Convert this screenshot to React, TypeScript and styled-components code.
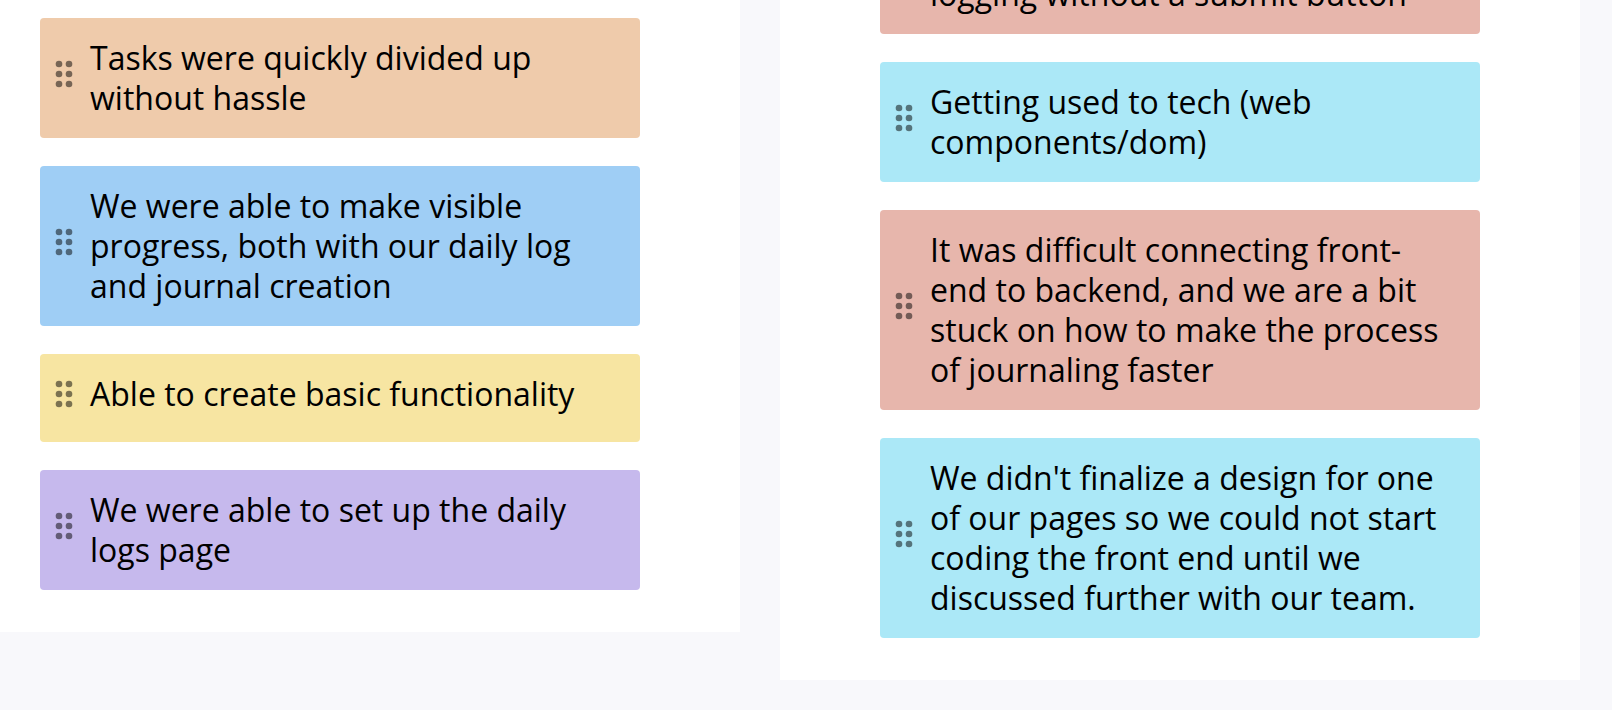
import React from "react";
import styled, { createGlobalStyle } from "styled-components";

const GlobalStyle = createGlobalStyle`
  *, *::before, *::after {
    box-sizing: border-box;
  }
  body {
    margin: 0;
    background: #f8f8fb;
    color: #000;
    font-family: "Open Sans", "Noto Sans", sans-serif;
    font-size: 32px;
    line-height: 40px;
  }
`;

const Board = styled.main`
  display: grid;
  grid-template-columns: 37fr 40fr;
  align-items: start;
  gap: 40px;
  min-height: 100vh;
  padding-right: 32px;
  overflow: hidden;
`;

const Column = styled.section<{ $edge?: boolean }>`
  background: #fff;
  padding: ${({ $edge }) => ($edge ? "18px 100px 42px 40px" : "0 100px 42px")};
`;

const CardList = styled.ul`
  display: flex;
  flex-direction: column;
  gap: 28px;
  margin: 0;
  padding: 0;
  list-style: none;
`;

const tones = {
  orange: "#efcbab",
  blue: "#9fcef5",
  yellow: "#f7e5a2",
  purple: "#c6b9ed",
  red: "#e7b6ac",
  cyan: "#abe8f7",
};

type Tone = keyof typeof tones;

const Card = styled.li<{ $tone: Tone; $continued?: boolean }>`
  display: flex;
  min-height: ${({ $continued }) => ($continued ? "0" : "88px")};
  margin-top: ${({ $continued }) => ($continued ? "-26px" : "0")};
  padding: 0 36px 0 4px;
  border-radius: 4px;
  background: ${({ $tone }) => tones[$tone]};
`;

const HandleSlot = styled.div`
  display: flex;
  flex: 0 0 46px;
  align-items: center;
  padding-bottom: 8px;
`;

const Handle = styled.button`
  display: block;
  width: 40px;
  height: 40px;
  padding: 0;
  border: 0;
  background: none;
  color: rgba(0, 0, 0, 0.5);
  cursor: grab;
`;

const CardText = styled.p<{ $continued?: boolean }>`
  flex: 1;
  min-width: 0;
  margin: 0;
  padding: ${({ $continued }) => ($continued ? "0 0 20px" : "20px 0")};
`;

const DragIcon = () => (
  <svg width="40" height="40" viewBox="0 0 24 24" fill="currentColor" aria-hidden="true">
    {[9, 15].map((cx) =>
      [6, 12, 18].map((cy) => <circle key={`${cx}-${cy}`} cx={cx} cy={cy} r="2" />)
    )}
  </svg>
);

interface Note {
  text: string;
  tone: Tone;
  continued?: boolean;
}

const wentWell: Note[] = [
  { tone: "orange", text: "Tasks were quickly divided up without hassle" },
  {
    tone: "blue",
    text: "We were able to make visible progress, both with our daily log and journal creation",
  },
  { tone: "yellow", text: "Able to create basic functionality" },
  { tone: "purple", text: "We were able to set up the daily logs page" },
];

const toImprove: Note[] = [
  { tone: "red", text: "logging without a submit button", continued: true },
  { tone: "cyan", text: "Getting used to tech (web components/dom)" },
  {
    tone: "red",
    text: "It was difficult connecting front-end to backend, and we are a bit stuck on how to make the process of journaling faster",
  },
  {
    tone: "cyan",
    text: "We didn't finalize a design for one of our pages so we could not start coding the front end until we discussed further with our team.",
  },
];

const Notes = ({ notes }: { notes: Note[] }) => (
  <CardList>
    {notes.map(({ text, tone, continued }) => (
      <Card key={text} $tone={tone} $continued={continued}>
        <HandleSlot>
          {!continued && (
            <Handle type="button" aria-label="Move card">
              <DragIcon />
            </Handle>
          )}
        </HandleSlot>
        <CardText $continued={continued}>{text}</CardText>
      </Card>
    ))}
  </CardList>
);

export default function App() {
  return (
    <>
      <GlobalStyle />
      <Board>
        <Column $edge>
          <Notes notes={wentWell} />
        </Column>
        <Column>
          <Notes notes={toImprove} />
        </Column>
      </Board>
    </>
  );
}
